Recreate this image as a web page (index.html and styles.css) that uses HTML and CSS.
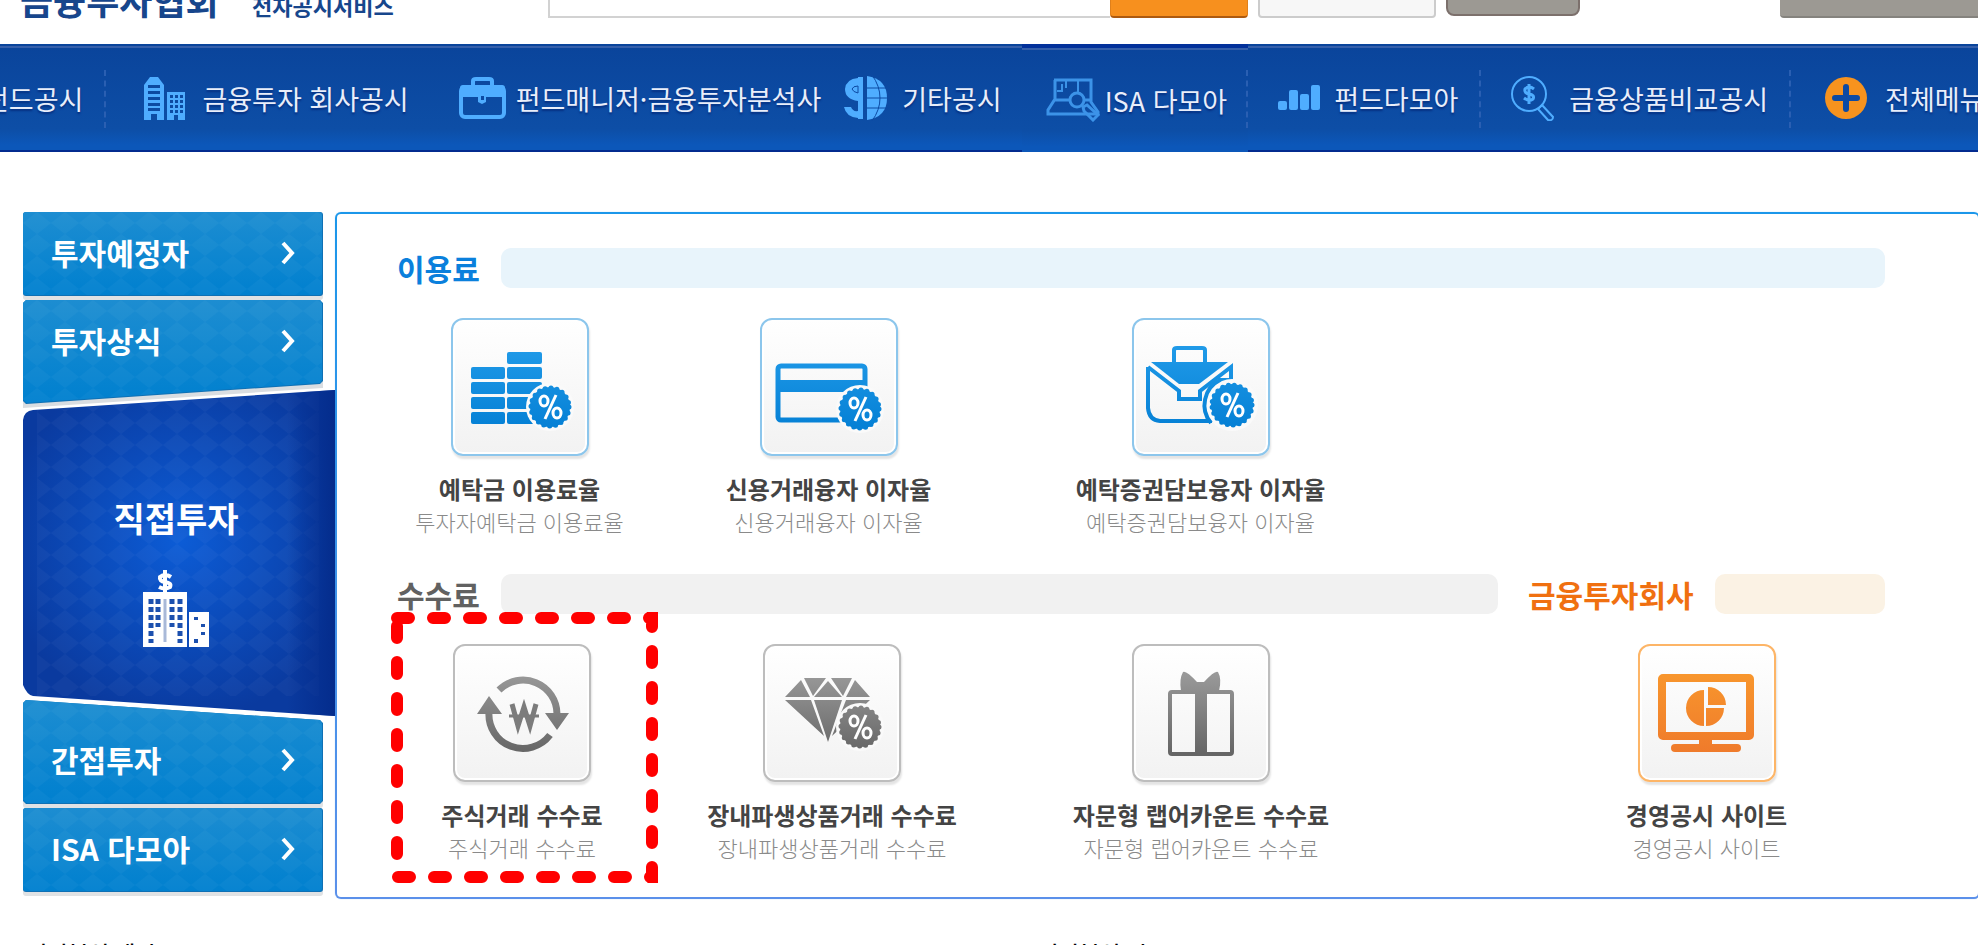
FILE: index.html
```html
<!DOCTYPE html>
<html lang="ko">
<head>
<meta charset="utf-8">
<title>금융투자협회 전자공시서비스</title>
<link rel="stylesheet" href="styles.css">
</head>
<body>
<svg class="defs" aria-hidden="true">
  <defs>
    <linearGradient id="blue" gradientUnits="userSpaceOnUse" x1="0" y1="30" x2="0" y2="110"><stop offset="0" stop-color="#209ae8"/><stop offset="1" stop-color="#0580d5"/></linearGradient>
    <linearGradient id="gray" gradientUnits="userSpaceOnUse" x1="0" y1="30" x2="0" y2="110"><stop offset="0" stop-color="#999"/><stop offset="1" stop-color="#656565"/></linearGradient>
    <linearGradient id="orange" gradientUnits="userSpaceOnUse" x1="0" y1="30" x2="0" y2="110"><stop offset="0" stop-color="#f8962d"/><stop offset="1" stop-color="#ef7a2b"/></linearGradient>
    <linearGradient id="sky" x1="0" y1="0" x2="0" y2="1"><stop offset="0" stop-color="#1d8dd1"/><stop offset="1" stop-color="#0080cf"/></linearGradient>
    <radialGradient id="navy" gradientUnits="userSpaceOnUse" cx="157" cy="150" r="180"><stop offset="0" stop-color="#0c5cd6"/><stop offset="1" stop-color="#0a3a9f"/></radialGradient>
    <linearGradient id="edge" x1="0" y1="0" x2="1" y2="0"><stop offset="0" stop-color="#042c8c" stop-opacity="0"/><stop offset="1" stop-color="#042c8c"/></linearGradient>
    <pattern id="diamonds" width="28" height="22" patternUnits="userSpaceOnUse"><path d="M14 0L28 11L14 22L0 11Z" fill="#fff" fill-opacity=".03"/></pattern>
    <g id="percent" fill="none" stroke="#fff" stroke-width="3">
      <ellipse cx="-6" cy="-6" rx="4" ry="5"/><ellipse cx="7" cy="6" rx="4" ry="5"/><path d="M6 -12L-5 12"/>
    </g>
  </defs>
</svg>

<header class="top">
  <a class="logo" href="#">금융투자협회</a>
  <a class="logo-sub" href="#">전자공시서비스</a>
  <form class="search">
    <input class="search-box" type="text" aria-label="검색어">
    <button class="search-go" type="button" aria-label="검색"></button>
    <button class="plain" type="button" aria-label="상세검색"></button>
    <button class="dark" type="button" aria-label="도움말"></button>
  </form>
  <button class="side" type="button" aria-label="바로가기"></button>
</header>

<nav class="nav">
  <a class="n-fund sep" href="#">펀드공시</a>
  <a class="n-company" href="#">
    <svg width="42" height="46" viewBox="0 0 42 46"><path fill="#4fadff" fill-rule="evenodd" d="M0 10L6 2H14L20 10V45H13V39H7V45H0ZM4 10V13H16V10ZM4 16V19H16V16ZM4 22V25H16V22ZM4 28V31H16V28ZM4 33V36H16V33ZM23 17H41V45H34V40H30V45H23ZM26 20V23H29V20ZM31 20V23H34V20ZM36 20V23H39V20ZM26 25V28H29V25ZM31 25V28H34V25ZM36 25V28H39V25ZM26 30V33H29V30ZM31 30V33H34V30ZM36 30V33H39V30ZM26 35V38H29V35ZM31 35V38H34V35ZM36 35V38H39V35Z"/></svg>
    금융투자 회사공시</a>
  <a class="n-manager" href="#">
    <svg width="47" height="44" viewBox="0 0 47 44"><g fill="none" stroke="#4fadff" stroke-width="4"><rect x="2" y="11" width="43" height="30" rx="4"/><path d="M14 10V5Q14 3 17 3H30Q33 3 33 5V10"/></g><path fill="#4fadff" d="M1 12Q1 9 4 9H43Q46 9 46 12V21H27V26L23 28L19 26V21H1Z"/><rect x="22" y="20" width="3" height="4" fill="#0c4aa3"/></svg>
    펀드매니저·금융투자분석사</a>
  <a class="n-etc" href="#">
    <svg width="44" height="46" viewBox="0 0 44 46"><g fill="#4fadff"><path d="M14 2H19V44H14V43Q2 42 0 32H7Q9 37 14 36V26Q1 24 1 14Q2 4 14 3Z"/><path d="M23 1Q43 4 43 23Q43 42 23 45Z"/></g><path d="M8 14Q9 17 14 18V11Q9 11 8 14ZM22 13H44M22 23H44M22 33H44M28 0Q36 11 36 23T28 46" fill="none" stroke="#0c4aa3" stroke-width="1"/></svg>
    기타공시</a>
  <a class="n-isa sep" href="#">
    <svg width="54" height="44" viewBox="0 0 54 44" fill="none" stroke="#3c93e8" stroke-width="3"><path d="M8 2H45V24L52 34V36H2V32L9 21V2M9 22H24M37 22H44"/><path stroke-width="2" d="M11 13H16V6M20 3V10M32 3V14"/><circle cx="31" cy="22" r="7"/><path d="M37 29L41 27L52 37L47 42L38 33Z"/></svg>
    ISA 다모아</a>
  <a class="n-damoa sep" href="#">
    <svg width="43" height="26" viewBox="0 0 43 26" fill="#4fadff"><rect y="16" width="9" height="9" rx="2"/><rect x="11" y="5" width="9" height="20" rx="2"/><rect x="22" y="9" width="9" height="16" rx="2"/><rect x="33" width="9" height="25" rx="2"/></svg>
    펀드다모아</a>
  <a class="n-compare sep" href="#">
    <svg width="43" height="46" viewBox="0 0 43 46" fill="none" stroke="#4fadff" stroke-width="2"><circle cx="18" cy="19" r="17"/><path d="M27 34L31 30L42 42Q42 46 37 45Z"/><path stroke-width="3" d="M23 14Q18 10 14 14Q13 18 18 19Q24 20 22 24Q18 27 13 23M18 9V29"/></svg>
    금융상품비교공시</a>
  <a class="n-all" href="#">
    <svg width="42" height="42" viewBox="0 0 42 42"><circle cx="21" cy="21" r="21" fill="#f7931e"/><path d="M21 10V32M10 21H32" stroke="#0c4aa3" stroke-width="6" stroke-linecap="round"/></svg>
    전체메뉴</a>
</nav>

<main class="main">
  <aside class="menu">
    <a class="m-item m-first" href="#">
      <svg class="shape" viewBox="0 0 300 88" preserveAspectRatio="none"><rect y="4" width="300" height="84" rx="3" fill="#e0e2e4"/><rect width="300" height="84" rx="3" fill="#0f70b4"/><rect width="299" height="83" rx="3" fill="url(#sky)"/><rect width="299" height="83" rx="3" fill="url(#diamonds)"/></svg>
      <span>투자예정자</span><svg class="chev" viewBox="0 0 16 24"><path d="M3 2L12 12L3 22"/></svg>
    </a>
    <a class="m-item m-second" href="#">
      <svg class="shape" viewBox="0 0 300 108" preserveAspectRatio="none"><path d="M0 3H300V88L0 108Z" fill="#d9dde1"/><path d="M3 0H297L300 3V81L297 84L3 104L0 101V3Z" fill="#0f70b4"/><path d="M3 0H297L299 3V80L297 83L3 103L0 100V3Z" fill="url(#sky)"/><path d="M0 0H299V83L0 103Z" fill="url(#diamonds)"/></svg>
      <span>투자상식</span><svg class="chev" viewBox="0 0 16 24"><path d="M3 2L12 12L3 22"/></svg>
    </a>
    <a class="m-active" href="#">
      <svg class="shape" viewBox="0 0 312 326" preserveAspectRatio="none"><path d="M0 30Q1 21 10 20L312 0V326L10 306Q4 305 0 295Z" fill="url(#navy)"/><path d="M14 20L296 2V306H14Z" fill="url(#diamonds)"/><path d="M264 3L312 0V326L264 323Z" fill="url(#edge)"/></svg>
      <span>직접투자</span>
      <svg class="bldg" width="66" height="78" viewBox="0 0 66 78"><path fill="#fff" d="M0 22H44V77H0ZM46 42H66V77H46Z"/><path fill="none" stroke="#fff" stroke-width="4" d="M28 7Q22 3 17 7Q16 11 22 12Q29 13 27 17Q22 20 16 17M22 0V22"/><path d="M22 29V72" stroke="#a9b9d8" stroke-width="3"/><path fill="none" stroke="#1c50ae" stroke-width="5" stroke-dasharray="5 3" d="M8 29V73M15 29V57M29 29V57M37 29V73"/><path fill="#1c50ae" d="M51 47h4v3h-4zM58 54h4v3h-4zM58 62h4v3h-4zM51 69h4v4h-4z"/></svg>
    </a>
    <a class="m-item m-fourth" href="#">
      <svg class="shape" viewBox="0 0 300 108" preserveAspectRatio="none"><rect y="24" width="300" height="84" rx="3" fill="#e0e2e4"/><path d="M3 0L297 20L300 23V101L297 104H3L0 101V3Z" fill="#0f70b4"/><path d="M3 0L297 20L299 23V100L297 103H3L0 100V3Z" fill="url(#sky)"/><path d="M0 0L299 20V103H0Z" fill="url(#diamonds)"/></svg>
      <span>간접투자</span><svg class="chev" viewBox="0 0 16 24"><path d="M3 2L12 12L3 22"/></svg>
    </a>
    <a class="m-item m-first" href="#">
      <svg class="shape" viewBox="0 0 300 88" preserveAspectRatio="none"><rect y="4" width="300" height="84" rx="3" fill="#e0e2e4"/><rect width="300" height="84" rx="3" fill="#0f70b4"/><rect width="299" height="83" rx="3" fill="url(#sky)"/><rect width="299" height="83" rx="3" fill="url(#diamonds)"/></svg>
      <span>ISA 다모아</span><svg class="chev" viewBox="0 0 16 24"><path d="M3 2L12 12L3 22"/></svg>
    </a>
  </aside>

  <section class="panel">
    <div class="group blue">
      <h2>이용료<i></i></h2>
      <div class="cards">
        <a class="card" href="#">
          <svg class="tile" viewBox="0 0 134 134"><g transform="translate(-2 -2)"><g fill="url(#blue)"><rect x="20" y="49" width="34" height="12" rx="2"/><rect x="20" y="64" width="34" height="12" rx="2"/><rect x="20" y="79" width="34" height="12" rx="2"/><rect x="20" y="94" width="34" height="12" rx="2"/><rect x="56" y="34" width="35" height="12" rx="2"/><rect x="56" y="49" width="35" height="12" rx="2"/><rect x="56" y="64" width="35" height="12" rx="2"/><rect x="56" y="79" width="35" height="12" rx="2"/><rect x="56" y="94" width="35" height="12" rx="2"/></g><circle cx="99" cy="89" r="24" fill="#fafafa"/><circle cx="99" cy="89" r="20" fill="url(#blue)"/><circle cx="99" cy="89" r="19" fill="none" stroke="url(#blue)" stroke-width="5" stroke-linecap="round" stroke-dasharray="0 6"/><use href="#percent" x="99" y="89"/></g></svg>
          <b>예탁금 이용료율</b><span>투자자예탁금 이용료율</span>
        </a>
        <a class="card" href="#">
          <svg class="tile" viewBox="0 0 134 134"><g transform="translate(-2 -2)"><rect x="18" y="48" width="87" height="54" rx="3" fill="none" stroke="url(#blue)" stroke-width="5"/><rect x="18" y="62" width="87" height="12" fill="url(#blue)"/><circle cx="100" cy="91" r="24" fill="#fafafa"/><circle cx="100" cy="91" r="20" fill="url(#blue)"/><circle cx="100" cy="91" r="19" fill="none" stroke="url(#blue)" stroke-width="5" stroke-linecap="round" stroke-dasharray="0 6"/><use href="#percent" x="100" y="91"/></g></svg>
          <b>신용거래융자 이자율</b><span>신용거래융자 이자율</span>
        </a>
        <a class="card" href="#">
          <svg class="tile" viewBox="0 0 134 134"><g transform="translate(-2 -2)"><g fill="none" stroke="url(#blue)" stroke-width="4"><path d="M42 44V32Q42 30 45 30H70Q73 30 73 32V44"/><path d="M16 49V90Q17 102 28 103H80M16 49L47 73V81H68V73L99 49V62L86 62"/></g><path fill="url(#blue)" d="M19 44H96L67 66H47Z"/><circle cx="100" cy="87" r="26" fill="#fafafa"/><path d="M88 62A28 28 0 0 0 79 105" fill="none" stroke="url(#blue)" stroke-width="4"/><circle cx="100" cy="87" r="21" fill="url(#blue)"/><circle cx="100" cy="87" r="20" fill="none" stroke="url(#blue)" stroke-width="5" stroke-linecap="round" stroke-dasharray="0 6"/><use href="#percent" x="100" y="87"/></g></svg>
          <b>예탁증권담보융자 이자율</b><span>예탁증권담보융자 이자율</span>
        </a>
      </div>
    </div>

    <div class="split">
      <div class="group gray">
        <h2>수수료<i></i></h2>
        <div class="cards">
          <a class="card" href="#">
            <svg class="tile" viewBox="0 0 134 134"><g transform="translate(-2 -2)"><g fill="none" stroke="url(#gray)" stroke-width="7"><path d="M46 46A34 34 0 0 1 104 70M36 68A34 34 0 0 0 97 91"/></g><path fill="url(#gray)" d="M92 69H116L104 86ZM24 70H49L36 52Z"/><path fill="none" stroke="#7c7c7c" stroke-width="5" d="M59 60L65 82L71 63L77 82L83 60"/><path stroke="#7c7c7c" stroke-width="3" d="M56 72H86"/></g></svg>
            <b>주식거래 수수료</b><span>주식거래 수수료</span>
            <svg class="mark" width="267" height="271" viewBox="0 0 267 271"><g fill="none" stroke="red" stroke-width="12" stroke-linecap="round" stroke-dasharray="12 24"><path d="M6 6H280M261 3V290M6 14V244M7 265H280"/></g></svg>
          </a>
          <a class="card" href="#">
            <svg class="tile" viewBox="0 0 134 134"><g transform="translate(-2 -2)"><g fill="url(#gray)"><path d="M38 36L47 53H22ZM41 34H63L50 52ZM65 37L79 53H51ZM68 34H89L80 52ZM92 36L107 53H83ZM22 56H48L61 92ZM51 56H79L65 98ZM83 56H107L69 92Z"/></g><circle cx="97" cy="83" r="24" fill="#fafafa"/><circle cx="97" cy="83" r="20" fill="url(#gray)"/><circle cx="97" cy="83" r="19" fill="none" stroke="url(#gray)" stroke-width="5" stroke-linecap="round" stroke-dasharray="0 6"/><use href="#percent" x="97" y="83"/></g></svg>
            <b>장내파생상품거래 수수료</b><span>장내파생상품거래 수수료</span>
          </a>
          <a class="card" href="#">
            <svg class="tile" viewBox="0 0 134 134"><g transform="translate(-2 -2)"><rect x="38" y="48" width="62" height="62" rx="2" fill="none" stroke="url(#gray)" stroke-width="4"/><path fill="url(#gray)" d="M63 46H75V111H63ZM49 47Q47 35 51 28Q54 26 65 38H72Q83 26 86 28Q90 35 87 47Z"/></g></svg>
            <b>자문형 랩어카운트 수수료</b><span>자문형 랩어카운트 수수료</span>
          </a>
        </div>
      </div>
      <div class="group orange">
        <h2>금융투자회사<i></i></h2>
        <a class="card" href="#">
          <svg class="tile" viewBox="0 0 134 134"><g transform="translate(-2 -2)"><rect x="24" y="34" width="88" height="58" rx="1" fill="none" stroke="url(#orange)" stroke-width="8" stroke-linejoin="round"/><path fill="url(#orange)" d="M61 95H74V100H61ZM66 46V82A18 18 0 0 1 66 46ZM70 43A18 18 0 0 1 88 61H70ZM68 64H86A18 18 0 0 1 68 82Z"/><rect x="33" y="100" width="70" height="8" rx="4" fill="url(#orange)"/></g></svg>
          <b>경영공시 사이트</b><span>경영공시 사이트</span>
        </a>
      </div>
    </div>
  </section>
</main>

<section class="below">
  <h3>자산분석 개시</h3>
  <h3>자산분석 시</h3>
</section>
</body>
</html>
```
FILE: styles.css
```css
* { box-sizing: border-box; }
html, body { height: 100%; }
body {
  margin: 0;
  overflow: hidden;
  background: #fff;
  font-family: "Noto Sans CJK KR", sans-serif;
}
a { color: inherit; text-decoration: none; }
.defs { position: absolute; width: 0; height: 0; }

.top {
  display: flex;
  align-items: flex-end;
  height: 44px;
  padding: 0 0 26px 20px;
  color: #17468c;
  white-space: nowrap;
}
.logo { width: 232px; font-size: 36px; line-height: 38px; font-weight: 700; }
.logo-sub { width: 296px; font-size: 22px; line-height: 26px; font-weight: 700; }
.search { display: flex; flex: 1; align-items: flex-end; }
.search-box {
  width: 562px;
  height: 48px;
  border: 2px solid #d2d2d2;
  border-right: 0;
  background: #fff;
}
.search-go, .plain, .dark, .side { height: 48px; padding: 0; }
.search-go {
  width: 138px;
  margin-right: 10px;
  border: 1px solid #e0801b;
  border-bottom: 2px solid #ad5a10;
  border-radius: 0 0 4px 4px;
  background: #f7901e;
}
.plain {
  width: 178px;
  margin-right: 10px;
  border: 2px solid #ccc;
  border-radius: 4px;
  background: #f7f7f7;
}
.dark {
  width: 134px;
  margin-bottom: 2px;
  border: 2px solid #7c706c;
  border-radius: 8px;
  background: #9c9993;
}
.side {
  width: 198px;
  border: 0;
  border-bottom: 2px solid #85837e;
  border-radius: 0 0 0 4px;
  background: #9c9993;
}

.nav {
  display: flex;
  height: 108px;
  margin-left: -16px;
  background: linear-gradient(#0a449b, #0d4ea6 80%, #0c57b9 95%);
  border-bottom: 2px solid #032b8f;
  box-shadow: inset 0 2px #0a449b, inset 0 4px #355faa;
  color: #e9eefa;
  font-size: 27px;
  white-space: nowrap;
}
.nav a {
  position: relative;
  display: flex;
  flex: none;
  align-items: center;
  padding-top: 2px;
  text-shadow: 0 2px 2px #062f80;
}
.sep::after {
  content: "";
  position: absolute;
  right: 0;
  top: 26px;
  height: 58px;
  border-right: 2px dashed #2a5fb2;
}
.nav .n-fund { padding-right: 23px; }
.nav .n-company { padding-left: 38px; gap: 16px; }
.nav .n-manager { padding-left: 50px; gap: 10px; }
.nav .n-etc { padding-left: 23px; gap: 14px; }
.nav .n-isa {
  height: 108px;
  margin-left: 20px;
  padding: 4px 21px 0 24px;
  gap: 5px;
  background: linear-gradient(#0a449b, #0d4ea6 80%, #0c57b9 95%);
  box-shadow: inset 0 4px #02309a, inset 0 6px #355faa;
}
.nav .n-damoa { padding-left: 30px; padding-right: 23px; gap: 13px; }
.nav .n-compare { padding-left: 30px; padding-right: 23px; gap: 15px; }
.nav .n-all { padding-left: 34px; gap: 18px; }

.main { display: flex; padding: 60px 0 0 23px; margin-right: -2px; }
.menu { flex: none; width: 312px; color: #fff; font-size: 30px; font-weight: 700; }
.m-item {
  position: relative;
  display: flex;
  justify-content: space-between;
  width: 300px;
  padding: 16px 27px 0 28px;
  line-height: 48px;
}
.m-item span, .m-active span { position: relative; }
.m-first { height: 88px; }
.m-second { height: 108px; }
.m-fourth { height: 108px; padding-top: 35px; }
.shape { position: absolute; left: 0; top: 0; width: 100%; height: 100%; }
.chev {
  position: relative;
  width: 16px;
  height: 24px;
  margin-top: 13px;
  fill: none;
  stroke: #fff;
  stroke-width: 4;
}
.m-active {
  position: relative;
  display: flex;
  flex-direction: column;
  align-items: center;
  gap: 26px;
  height: 326px;
  margin: -18px 0 -16px;
  padding: 102px 6px 0 0;
  font-size: 34px;
  line-height: 52px;
}
.bldg { position: relative; }

.panel {
  flex: 1;
  padding: 34px 93px 35px 60px;
  border: 2px solid transparent;
  border-radius: 6px;
  background: linear-gradient(#fff, #fff) padding-box, linear-gradient(#1b97ea, #5b90ea) border-box;
  box-shadow: 0 0 1px #8cc0f2;
}
.group h2 {
  display: flex;
  align-items: center;
  gap: 21px;
  height: 40px;
  margin: 0 0 30px;
  font-size: 30px;
  font-weight: 700;
  white-space: nowrap;
}
.group i { flex: 1; height: 40px; border-radius: 10px; }
.blue h2 { color: #0a80dc; }
.blue i { background: #e8f4fb; }
.gray h2 { color: #616161; }
.gray i { background: #f1f1f1; }
.orange h2 { color: #f07010; }
.orange i { background: #fbf2e4; }
.cards { display: grid; grid-template-columns: 250fr 370fr 368fr 113fr; }
.blue .cards { grid-template-columns: 245fr 373fr 371fr 499fr; }
.split { display: grid; grid-template-columns: 1101fr 357fr; gap: 30px; margin-top: 38px; }
.card {
  position: relative;
  display: flex;
  flex-direction: column;
  align-items: center;
  white-space: nowrap;
}
.tile {
  width: 138px;
  height: 138px;
  margin-bottom: 16px;
  border: 2px solid #8cc6ec;
  border-radius: 12px;
  background: linear-gradient(#fff, #f2f2f2);
  box-shadow: inset 0 0 0 2px #fff, 1px 3px 2px #e4e4e4;
}
.gray .tile { border-color: #bdbdbd; }
.orange .tile { border-color: #fdb567; }
.card b { font-size: 24px; line-height: 34px; color: #444; }
.card span { font-size: 22px; line-height: 30px; font-weight: 300; color: #8a8a8a; }
.mark { position: absolute; left: -6px; top: -32px; }

.below {
  display: grid;
  grid-template-columns: 1003fr 931fr;
  padding: 40px 0 0 28px;
}
.below h3 { margin: 0; font-size: 22px; line-height: 26px; font-weight: 500; }
```
